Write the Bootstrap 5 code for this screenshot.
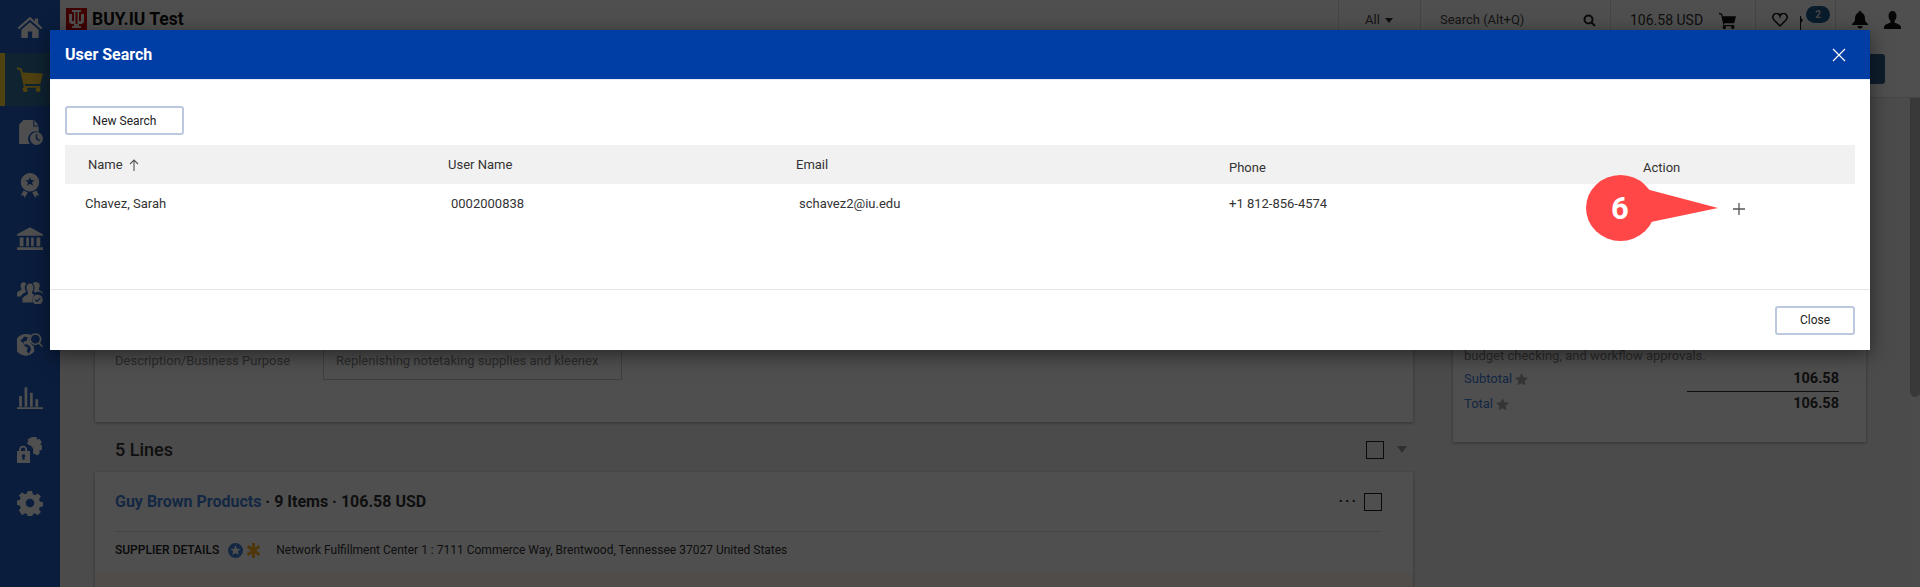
<!DOCTYPE html>
<html lang="en">
<head>
<meta charset="utf-8">
<title>User Search</title>
<link rel="stylesheet" href="https://cdn.jsdelivr.net/npm/bootstrap@5.3.0/dist/css/bootstrap.min.css">
<style>
html,body{height:587px;overflow:hidden}
body{font-family:Roboto,"Liberation Sans",sans-serif;font-size:13px;color:#222;background:#f1f1f1}
.shell{height:587px;position:relative}
.side-rail{width:60px;background:#205ec6;flex:none}
.rail-item{height:53px;color:#fff}
.rail-item.on{background:#30709f;border-left:5px solid #ffd035;color:#ffd035;padding-right:5px}
.rail-item svg{width:26px;height:26px;fill:currentColor;margin-bottom:2px}
.work{min-width:0}
.top-strip{height:40px;background:#fff;box-shadow:0 1px 0 #e5e5e5}
.brand-zone{width:256px;padding-left:6px;margin-top:-2px}
.brand-mark{width:21px;height:22px;background:#c00;color:#fff;margin-right:5px}
.brand-name{font-size:17.5px;font-weight:700;color:#111;line-height:22px}
.tool-cell{height:40px;border-left:1px solid #ddd}
.tool-text{font-size:13px;color:#444}
.amount{font-size:14px;color:#333}
.msg-badge{position:absolute;left:11px;top:-6px;width:24px;height:17px;border-radius:9px;background:#1e5a8f;color:#ddd;font-size:10px;font-weight:700;line-height:17px;text-align:center}
.flag-wrap{position:relative;width:30px;height:16px;margin-left:7px}
.sub-strip{height:58px;background:#fff;border-bottom:1px solid #ddd;padding-right:35px}
.dark-action{width:80px;height:30px;background:#2f5f8f;border-radius:3px}
.lower-row{min-height:0}
.content-zone{padding:12px 34px 0 35px;gap:40px}
.left-col{width:1318px}
.right-col{width:413px}
.surface{background:#fff;box-shadow:0 1px 3px rgba(0,0,0,.35)}
.head-card{height:312px;padding:0 20px 42px;align-items:flex-end}
.purpose-label{width:208px;align-self:flex-start;margin-top:auto;margin-bottom:10px;color:#888}
.purpose-box{width:299px;height:32px;border:1px solid #ccc;padding:2px 12px 0;color:#888}
.lines-head{height:50px;padding:5px 6px 0 20px}
.lines-title{font-size:18px;font-weight:500;color:#333}
.tick-box{width:18px;height:18px;border:1.5px solid #222;display:block}
.drop-caret{width:0;height:0;border:5px solid transparent;border-top:7px solid #999;border-bottom:0;margin-left:13px}
.supplier-card{height:115px}
.supplier-top{height:60px;margin:0 31px 0 20px;border-bottom:1px solid #ddd;font-size:16px;font-weight:700;color:#333}
.link-name{color:#4080d8}
.dots{letter-spacing:2px;font-size:16px;color:#222;margin-right:6px;font-weight:500}
.supplier-line{height:41px;margin:0 20px;padding-bottom:5px;font-size:12px;color:#333}
.supplier-tag{font-weight:500;color:#222;margin-right:9px}
.peach{height:20px;background:#fff6ec}
.sum-card{height:332px;padding:0 27px 0 11px;display:flex;flex-direction:column;justify-content:flex-end}
.sum-note{color:#888;line-height:16px;margin-bottom:5px}
.sum-row{height:25px}
.sum-link{color:#4080d8;font-size:13px}
.sum-val{font-size:14.5px;font-weight:700;color:#333;width:152px;text-align:right;line-height:19px}
.sum-row.ruled .sum-val{border-bottom:1px solid #333;padding-bottom:3px}
.sum-foot{height:23px}
.scroll-col{width:10px;flex:none;background:#f6f6f6}
.scroll-thumb{height:299px;background:#b8b8b8;border-radius:0 0 5px 5px}
.dim-layer{position:absolute;inset:0;background:rgba(0,0,0,.69)}
.dlg{position:absolute;left:50px;top:30px;width:1820px;height:320px;background:#fff;border:0;border-radius:0;box-shadow:0 5px 18px rgba(0,0,0,.5)}
.dlg .modal-header{height:50px;background:#003da5;color:#fff;padding:0 15px;border-radius:0;border-bottom:1px solid #e6ebf5}
.dlg .modal-title{font-size:16px;font-weight:700;color:#fff;line-height:20px}
.x-btn{width:14px;height:14px;margin-right:9px;line-height:0;border:0;background:none}
.dlg .modal-body{padding:26px 15px 0;flex:none;height:209px}
.dlg .modal-footer{height:61px;padding:0 15px 0;border-top:1px solid #e6e6e6;border-radius:0}
.ghost-btn{height:29px;font-size:12px;line-height:1;padding:0;border:2px solid #bcc8de;border-radius:3px;background:#fff;color:#222}
.ghost-btn.wide{width:119px}
.ghost-btn.narrow{width:80px;margin:0}
.result-table{margin:10px 0 0;table-layout:fixed;width:1790px;font-size:13px;color:#333;--bs-table-border-color:transparent}
.result-table th,.result-table td{border:0;padding:0;font-weight:400;background:none;box-shadow:none}
.result-table thead th{height:39px;background:#f1f1f1;vertical-align:top;color:#333}
.result-table tbody td{height:38px;vertical-align:top;color:#333}
.h-a{padding:10px 0 0 23px!important}
.h-b{padding:10px 0 0 3px!important}
.h-c{padding:10px 0 0 3px!important}
.h-d{padding:13px 0 0 3px!important}
.c-a{padding:10px 0 0 20px!important}
.c-b{padding:10px 0 0 6px!important}
.c-d{padding:10px 0 0 3px!important}
.c-e{padding:19px 0 0 93px!important;line-height:0}
.sort-up{margin-left:6px;vertical-align:-2px}
.callout{position:absolute;left:1586px;top:175px;width:134px;height:68px;overflow:visible}
.callout text{font-family:Roboto,"Liberation Sans",sans-serif;font-weight:700;font-size:31px;fill:#fff}
</style>
</head>
<body>
<div class="shell d-flex">
  <nav class="side-rail d-flex flex-column">
    <div class="rail-item d-flex align-items-center justify-content-center"><svg viewBox="0 0 24 24"><path d="M12 3.500 0.500 13.500l1.400 1.400L12 6.200l10.100 8.700 1.400-1.400-4-3.500V5h-3v2.700zM4 15.500V23h6v-6h4v6h6v-7.500L12 8.500z"/></svg></div>
    <div class="rail-item on d-flex align-items-center justify-content-center"><svg viewBox="0 0 24 24"><path d="M0 1l4.500 1.500L5.200 6 24 7l-2.500 9.500H7.500L7 18.500h14.500v1.500H8.500a2.200 2.200 0 1 1-3 2.500 2.200 2.200 0 0 1 1-3.200L6 18 3 4 0 3zM19 19.500a2.300 2.300 0 1 1 0 4.500 2.300 2.300 0 0 1 0-4.500z"/></svg></div>
    <div class="rail-item d-flex align-items-center justify-content-center"><svg viewBox="0 0 24 24"><path d="M6 1h9v6h5v5a7 7 0 0 0-8 11H2V5zM16 1l4 5h-4z"/><circle cx="18" cy="18" r="6"/><path d="M17.300 14h1.400v3.800l2.500 1.500-.7 1.200-3.200-2z" fill="#205ec6"/></svg></div>
    <div class="rail-item d-flex align-items-center justify-content-center"><svg viewBox="0 0 24 24"><path fill-rule="evenodd" d="M12 1a8.500 8.500 0 1 1 0 17 8.500 8.500 0 0 1 0-17zm0 3.500-1.300 3H7.500l2.600 2-1 3.200L12 10.800l2.900 1.900-1-3.200 2.600-2h-3.200z"/><path d="M6 17l4 2-3 5-1-2.500-2.500.5zM18 17l-4 2 3 5 1-2.500 2.500.5z"/></svg></div>
    <div class="rail-item d-flex align-items-center justify-content-center"><svg viewBox="0 0 24 24"><path d="M12 2 0 8.500V10h24V8.500zM2.500 11.500h3.500v8H2.500zM8.500 11.500h2.500v8H8.500zM13 11.500h2.500v8H13zM18 11.500h3.500v8H18zM0 20.500h24V23H0z"/></svg></div>
    <div class="rail-item d-flex align-items-center justify-content-center"><svg viewBox="0 0 24 24"><path d="M6 4a3 3 0 0 1 2.500 1.300A6 6 0 0 0 7.500 11l1 2c-3 1-4.500 2.500-4.800 4H0v-3c0-1.500 3-2.500 4-3V9.500C3 8 3 4 6 4zM18 4a3 3 0 0 1 3 3c0 1-.5 2.500-1 3.500v.5c1.500.5 4 1.500 4 3v.5a7 7 0 0 0-7.500-1l-1-1.500c1-2 1-5-.8-7.200A3 3 0 0 1 18 4z"/><path d="M12 5c2.500 0 3.500 2.500 3 5.500l-1 2.500v1.500l2 1a7 7 0 0 0-1.500 7H5v-3c0-2 3.500-3.500 5-4.500V13l-1-2.500C8.500 7.500 9.500 5 12 5z"/><circle cx="19" cy="20" r="4.800"/><path d="M16.800 20l1.600 1.600 3-3" fill="none" stroke="#205ec6" stroke-width="1.200"/></svg></div>
    <div class="rail-item d-flex align-items-center justify-content-center"><svg viewBox="0 0 24 24"><path d="M10 3a10 10 0 0 1 3 .5 7 7 0 0 0 2.500 10.500l.5 5a10 10 0 1 1-6-16zM3 9l3 2 1 3 3 1-1 4 2 2 2-4-1-3-3-2-2 1-1-3 3-1 1-3-3-1z" fill-rule="evenodd"/><path fill-rule="evenodd" d="M17 2a5.500 5.500 0 0 1 4.300 9l2.700 3-1.100 1-2.800-3A5.500 5.500 0 1 1 17 2zm0 1.500a4 4 0 1 0 0 8 4 4 0 0 0 0-8z"/></svg></div>
    <div class="rail-item d-flex align-items-center justify-content-center"><svg viewBox="0 0 24 24"><path d="M2 21V11h2.500v10zM7 21V3h2.500v18zM12 21V8h2.500v13zM17 21V14h2.500v7zM0 21.500h24V23H0z"/></svg></div>
    <div class="rail-item d-flex align-items-center justify-content-center"><svg viewBox="0 0 24 24"><path d="M14 0h4l.5 2.500 2-1 2.500 3-1.500 2 1.500 1.500V12l-2.500.5.500 2.500-2.500 2-2-1.500-1.500.5V12a5 5 0 0 0-3.500-4.500L9 6l1.500-2L9.500 2.500 12 1z"/><path fill-rule="evenodd" d="M5.500 8A4 4 0 0 1 9.500 12v1H12v11H0V13h2v-1a3.500 3.500 0 0 1 3.500-4zm0 1.700A2 2 0 0 0 3.700 12v1h3.800v-1a2 2 0 0 0-2-2.300zM6 16a1.500 1.500 0 0 0-1 2.700V21h2v-2.300A1.500 1.500 0 0 0 6 16z"/></svg></div>
    <div class="rail-item d-flex align-items-center justify-content-center"><svg viewBox="0 0 24 24"><path fill-rule="evenodd" d="M10 1h4l.6 3 2 .9 2.600-1.700 2.800 2.800-1.700 2.600.8 2 2.900.6v4l-2.900.6-.8 2 1.700 2.600-2.800 2.800-2.600-1.700-2 .8-.6 3h-4l-.6-3-2-.8-2.600 1.700L1.700 19l1.700-2.600-.8-2-2.900-.6v-4l2.900-.6.800-2L1.700 5l2.800-2.800 2.600 1.700 2-.9zM12 8a4 4 0 1 0 0 8 4 4 0 0 0 0-8z"/></svg></div>
  </nav>

  <div class="work flex-grow-1 d-flex flex-column">
    <header class="top-strip d-flex align-items-center">
      <div class="brand-zone d-flex align-items-center">
        <span class="brand-mark d-flex align-items-center justify-content-center"><svg width="15" height="18" viewBox="0 0 15 18" fill="#fff"><path d="M3 0h9v2h-2v9h2V4h3v8l-2 2h-3v2h2v2H3v-2h2v-2H2L0 12V4h3v7h2V2H3zM6.500 2v12h2V2z"/></svg></span>
        <span class="brand-name">BUY.IU Test</span>
      </div>
      <div class="flex-grow-1"></div>
      <div class="tool-cell d-flex align-items-center" style="width:82px;padding-left:26px"><span class="tool-text">All</span><span class="drop-caret" style="margin-left:5px;border-top-color:#333;border-width:4px;border-top-width:5px;border-bottom-width:0"></span></div>
      <div class="tool-cell d-flex align-items-center" style="width:190px;padding-left:19px"><span class="tool-text">Search (Alt+Q)</span><svg class="ms-auto" style="margin-right:14px" width="13" height="13" viewBox="0 0 13 13" fill="none" stroke="#222" stroke-width="2"><circle cx="5.500" cy="5.500" r="4"/><path d="M8.500 8.500 12 12"/></svg></div>
      <div class="tool-cell d-flex align-items-center" style="width:145px;padding-left:19px"><span class="amount">106.58 USD</span><svg class="ms-3" width="17" height="19" viewBox="0 0 24 24" fill="#111"><path d="M0 1l4.500 1.500L5.200 6 24 6l-2.500 10H7.500L7 18.500h14.500v1.500H8.500a2.200 2.200 0 1 1-3 2.500 2.200 2.200 0 0 1 1-3.200L6 18 3 4 0 3zM19 19.500a2.300 2.300 0 1 1 0 4.500 2.300 2.300 0 0 1 0-4.500z"/></svg></div>
      <div class="tool-cell d-flex align-items-center" style="width:80px;padding-left:16px"><svg width="16" height="14" viewBox="0 0 16 14" fill="none" stroke="#111" stroke-width="1.500"><path d="M8 13 1.800 6.800a3.500 3.500 0 0 1 0-5A3.500 3.500 0 0 1 8 3a3.500 3.500 0 0 1 6.200-1.200 3.500 3.500 0 0 1 0 5z"/></svg><span class="flag-wrap"><svg width="8" height="16" viewBox="0 0 8 16" fill="#111"><path d="M5 1h1v15H5zM6 3l2 2-2 3z"/></svg><span class="msg-badge">2</span></span></div>
      <div class="tool-cell d-flex align-items-center" style="width:85px;padding-left:16px;gap:16px"><svg width="16" height="18" viewBox="0 0 16 18" fill="#111"><path d="M8 0a1.500 1.500 0 0 1 1.500 1.700C12 2.500 13 4.500 13 8c0 2 1 3.500 3 5v1H0v-1c2-1.500 3-3 3-5 0-3.500 1-5.500 3.500-6.300A1.500 1.500 0 0 1 8 0zM5.500 15h5a2.500 2.500 0 0 1-5 0z"/></svg><svg width="17" height="18" viewBox="0 0 17 18" fill="#111"><path d="M8.500 0c2.500 0 4 2 4 5 0 2-1 4-2 5v1.500c2 1 6.500 2 6.500 5V18H0v-1.500c0-3 4.500-4 6.500-5V10c-1-1-2-3-2-5 0-3 1.500-5 4-5z"/></svg></div>
    </header>
    <div class="sub-strip d-flex align-items-center justify-content-end"><span class="dark-action"></span></div>
    <div class="lower-row d-flex flex-grow-1">
      <div class="content-zone d-flex flex-grow-1">
        <div class="left-col">
          <section class="surface head-card d-flex">
            <span class="purpose-label">Description/Business Purpose</span>
            <div class="purpose-box d-flex align-items-start"><span>Replenishing notetaking supplies and kleenex</span></div>
          </section>
          <div class="lines-head d-flex align-items-center">
            <span class="lines-title me-auto">5 Lines</span>
            <span class="tick-box"></span><span class="drop-caret"></span>
          </div>
          <section class="surface supplier-card">
            <div class="supplier-top d-flex align-items-center">
              <span><span class="link-name">Guy Brown Products</span> · 9 Items · 106.58 USD</span>
              <span class="dots ms-auto">···</span><span class="tick-box"></span>
            </div>
            <div class="supplier-line d-flex align-items-center">
              <span class="supplier-tag">SUPPLIER DETAILS</span>
              <svg width="15" height="15" viewBox="0 0 16 16"><circle cx="8" cy="8" r="8" fill="#4080d8"/><path d="m8 2.500 1.600 3.600 3.900.3-3 2.500.9 3.800L8 10.700l-3.400 2 .9-3.800-3-2.500 3.900-.3z" fill="#fff"/></svg>
              <svg class="ms-1 me-3" width="13" height="15" viewBox="0 0 14 16" stroke="#ffb020" stroke-width="3.200"><path d="M7 0v16M0.500 3.500l13 9M13.500 3.500l-13 9"/></svg>
              <span>Network Fulfillment Center 1 : 7111 Commerce Way, Brentwood, Tennessee 37027 United States</span>
            </div>
            <div class="peach"></div>
          </section>
        </div>
        <aside class="right-col">
          <section class="surface sum-card">
            <div class="sum-note">budget checking, and workflow approvals.</div>
            <div class="sum-row ruled d-flex justify-content-between align-items-start"><span class="sum-link">Subtotal <svg width="13" height="13" viewBox="0 0 16 16" fill="#aaa"><path d="m8 0 2.400 5.200 5.600.7-4.100 3.800 1.100 5.600-5-2.800-5 2.800 1.100-5.600L0 5.900l5.600-.7z"/></svg></span><span class="sum-val">106.58</span></div>
            <div class="sum-row d-flex justify-content-between align-items-start"><span class="sum-link">Total <svg width="13" height="13" viewBox="0 0 16 16" fill="#aaa"><path d="m8 0 2.400 5.200 5.600.7-4.100 3.800 1.100 5.600-5-2.800-5 2.800 1.100-5.600L0 5.900l5.600-.7z"/></svg></span><span class="sum-val">106.58</span></div>
            <div class="sum-foot"></div>
          </section>
        </aside>
      </div>
      <div class="scroll-col"><div class="scroll-thumb"></div></div>
    </div>
  </div>

  <div class="dim-layer"></div>

  <div class="modal-content dlg d-flex flex-column">
    <div class="modal-header d-flex align-items-center justify-content-between">
      <h5 class="modal-title">User Search</h5>
      <button type="button" class="x-btn p-0" aria-label="Close"><svg width="14" height="14" viewBox="0 0 14 14" stroke="#fff" stroke-width="1.200" fill="none"><path d="M1 1l12 12M13 1 1 13"/></svg></button>
    </div>
    <div class="modal-body">
      <button type="button" class="btn ghost-btn wide d-block">New Search</button>
      <table class="table result-table">
        <colgroup><col style="width:380px"><col style="width:348px"><col style="width:433px"><col style="width:414px"><col style="width:215px"></colgroup>
        <thead>
          <tr>
            <th class="h-a">Name<svg class="sort-up" width="10" height="12" viewBox="0 0 10 12" fill="none" stroke="#555" stroke-width="1.100"><path d="M5 12V1M1 5l4-4 4 4"/></svg></th>
            <th class="h-b">User Name</th>
            <th class="h-c">Email</th>
            <th class="h-d">Phone</th>
            <th class="h-d">Action</th>
          </tr>
        </thead>
        <tbody>
          <tr>
            <td class="c-a">Chavez, Sarah</td>
            <td class="c-b">0002000838</td>
            <td class="c-b">schavez2@iu.edu</td>
            <td class="c-d">+1 812-856-4574</td>
            <td class="c-e"><svg width="12" height="12" viewBox="0 0 12 12" stroke="#555" stroke-width="1.300"><path d="M6 0v12M0 6h12"/></svg></td>
          </tr>
        </tbody>
      </table>
    </div>
    <div class="modal-footer d-flex align-items-center justify-content-end">
      <button type="button" class="btn ghost-btn narrow">Close</button>
    </div>
  </div>

  <svg class="callout" viewBox="0 0 134 68">
    <ellipse cx="34.500" cy="33" rx="34.500" ry="33" fill="#ff4747"/>
    <path d="M60 14 132 33 60 48z" fill="#ff4747"/>
    <text x="34" y="44" text-anchor="middle">6</text>
  </svg>
</div>
<script src="https://cdn.jsdelivr.net/npm/bootstrap@5.3.0/dist/js/bootstrap.bundle.min.js"></script>
</body>
</html>
